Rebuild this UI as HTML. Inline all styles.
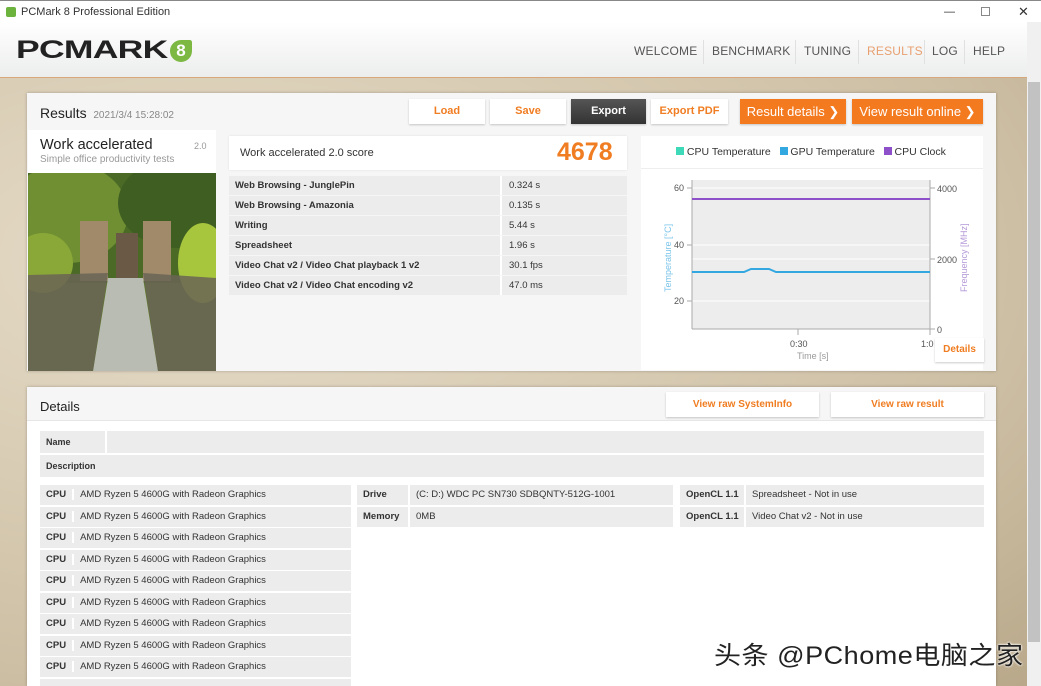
<!DOCTYPE html>
<html style="width:1041px;height:686px;overflow:hidden"><head><meta charset="utf-8"><style>
*{box-sizing:border-box;margin:0;padding:0}
body{width:1041px;height:686px;overflow:hidden;position:relative;font-family:"Liberation Sans","Noto Sans CJK SC",sans-serif;background:#d8cdb6;color:#333}
.abs{position:absolute}
.title{left:0;top:0;width:1041px;height:22px;background:#fff;font-size:11px;line-height:22px;border-top:1px solid #888}
.hdr{left:0;top:22px;width:1027px;height:56px;background:linear-gradient(#fff,#eceded);border-bottom:1px solid #d9a77d}
.nav{top:44px;font-size:12px;color:#555;letter-spacing:.2px}
.sep{top:40px;width:1px;height:24px;background:#e0e0e0}
.bg{left:0;top:78px;width:1027px;height:608px;background:radial-gradient(ellipse at 20% 30%,#e6dcc8,#cdbfa4 70%,#b9a88a)}
.scroll{left:1027px;top:22px;width:14px;height:664px;background:#f0f0f0}
.panel{background:#fff;box-shadow:0 0 3px rgba(0,0,0,.25)}
.btn{top:99px;height:25px;background:#fff;box-shadow:0 1px 2px rgba(0,0,0,.2);font-size:11px;font-weight:bold;color:#f07d22;text-align:center;line-height:25px}
.obtn{background:#f47a20;color:#fff;font-size:13px;font-weight:normal}
.row{height:19px;background:#ececec;font-size:9.5px;line-height:19px}
.lbl{font-weight:bold;padding-left:6px}
.cell{height:20px;background:#ececec;font-size:9.5px;line-height:20px}
</style></head><body>
<div class="abs title"><span style="position:absolute;left:6px;top:6px;width:10px;height:10px;background:#6cb33e;border-radius:2px"></span><span style="position:absolute;left:21px">PCMark 8 Professional Edition</span>
<span style="position:absolute;left:944px;top:0">—</span><span style="position:absolute;left:981px;top:6px;width:9px;height:9px;border:1px solid #888"></span><span style="position:absolute;left:1018px;font-size:13px">✕</span></div>
<div class="abs hdr"></div>
<div class="abs" style="left:16px;top:36px;font-size:25px;font-weight:900;color:#222;letter-spacing:-.5px;font-family:'Liberation Sans',sans-serif;transform:scaleX(1.42);transform-origin:left">PCMARK</div>
<div class="abs" style="left:170px;top:40px;width:22px;height:22px;background:#7cb842;border-radius:50% 10% 50% 50%;color:#fff;font-weight:bold;font-size:17px;text-align:center;line-height:22px">8</div>
<div class="abs nav" style="left:634px">WELCOME</div><div class="abs sep" style="left:703px"></div>
<div class="abs nav" style="left:712px">BENCHMARK</div><div class="abs sep" style="left:795px"></div>
<div class="abs nav" style="left:804px">TUNING</div><div class="abs sep" style="left:858px"></div>
<div class="abs nav" style="left:867px;color:#e8a070">RESULTS</div><div class="abs sep" style="left:924px"></div>
<div class="abs nav" style="left:932px">LOG</div><div class="abs sep" style="left:964px"></div>
<div class="abs nav" style="left:973px">HELP</div>
<div class="abs bg"></div>
<div class="abs scroll"><div style="position:absolute;left:1px;top:60px;width:12px;height:560px;background:#c2c2c2"></div></div>

<!-- Results panel -->
<div class="abs panel" style="left:27px;top:93px;width:969px;height:278px;background:#f6f6f6"></div>
<div class="abs" style="left:40px;top:105px;font-size:14px;color:#222">Results <span style="font-size:10px;color:#888">&nbsp;2021/3/4 15:28:02</span></div>
<div class="abs btn" style="left:409px;width:76px">Load</div>
<div class="abs btn" style="left:490px;width:76px">Save</div>
<div class="abs btn" style="left:571px;width:75px;background:linear-gradient(#555,#333);color:#fff">Export</div>
<div class="abs btn" style="left:651px;width:77px">Export PDF</div>
<div class="abs btn obtn" style="left:740px;width:106px">Result details ❯</div>
<div class="abs btn obtn" style="left:852px;width:131px">View result online ❯</div>
<div class="abs" style="left:28px;top:130px;width:188px;height:241px;background:#fff"></div>
<div class="abs" style="left:40px;top:137px;font-size:14.5px;color:#222">Work accelerated</div>
<div class="abs" style="left:194px;top:141px;font-size:9px;color:#999">2.0</div>
<div class="abs" style="left:40px;top:154px;font-size:10px;color:#999">Simple office productivity tests</div>
<svg class="abs" style="left:28px;top:173px" width="188" height="198" viewBox="0 0 188 198">
<rect width="188" height="198" fill="#5d7a2a"/>
<rect width="188" height="110" fill="#4a6a25"/>
<ellipse cx="40" cy="40" rx="60" ry="50" fill="#6f8f32"/><ellipse cx="150" cy="30" rx="60" ry="45" fill="#3f5e22"/>
<ellipse cx="175" cy="90" rx="25" ry="40" fill="#a7c63e"/><ellipse cx="15" cy="90" rx="30" ry="30" fill="#8aa838"/>
<rect x="52" y="48" width="28" height="60" fill="#a08a6a"/><rect x="115" y="48" width="28" height="60" fill="#a08a6a"/>
<rect x="88" y="60" width="22" height="45" fill="#6a5a45"/>
<polygon points="80,105 115,105 130,198 65,198" fill="#b9bcb2"/>
<polygon points="0,102 80,100 65,198 0,198" fill="#6a6456" opacity=".85"/>
<polygon points="115,100 188,105 188,198 130,198" fill="#6a6456" opacity=".85"/>
</svg>
<div class="abs" style="left:229px;top:136px;width:398px;height:34px;background:#fff;box-shadow:0 0 2px rgba(0,0,0,.1)"></div>
<div class="abs" style="left:240px;top:147px;font-size:11px;color:#333">Work accelerated 2.0 score</div>
<div class="abs" style="left:557px;top:138px;font-size:25px;font-weight:bold;color:#f07d22">4678</div>
<div class="abs" style="left:229px;top:176px;width:398px">
<div class="row" style="position:relative;margin-bottom:1px"><span class="lbl">Web Browsing - JunglePin</span><span style="position:absolute;left:271px;border-left:2px solid #fff;padding-left:7px">0.324 s</span></div>
<div class="row" style="position:relative;margin-bottom:1px"><span class="lbl">Web Browsing - Amazonia</span><span style="position:absolute;left:271px;border-left:2px solid #fff;padding-left:7px">0.135 s</span></div>
<div class="row" style="position:relative;margin-bottom:1px"><span class="lbl">Writing</span><span style="position:absolute;left:271px;border-left:2px solid #fff;padding-left:7px">5.44 s</span></div>
<div class="row" style="position:relative;margin-bottom:1px"><span class="lbl">Spreadsheet</span><span style="position:absolute;left:271px;border-left:2px solid #fff;padding-left:7px">1.96 s</span></div>
<div class="row" style="position:relative;margin-bottom:1px"><span class="lbl">Video Chat v2 / Video Chat playback 1 v2</span><span style="position:absolute;left:271px;border-left:2px solid #fff;padding-left:7px">30.1 fps</span></div>
<div class="row" style="position:relative;margin-bottom:1px"><span class="lbl">Video Chat v2 / Video Chat encoding v2</span><span style="position:absolute;left:271px;border-left:2px solid #fff;padding-left:7px">47.0 ms</span></div>
</div>
<div class="abs" style="left:641px;top:136px;width:342px;height:234px;background:#fff"></div>
<div class="abs" style="left:676px;top:146px;font-size:10.5px;color:#333"><span style="display:inline-block;width:8px;height:8px;background:#3dd9b8"></span> CPU Temperature &nbsp; <span style="display:inline-block;width:8px;height:8px;background:#33a8e0"></span> GPU Temperature &nbsp; <span style="display:inline-block;width:8px;height:8px;background:#8e50c8"></span> CPU Clock</div>
<div class="abs" style="left:641px;top:168px;width:342px;height:1px;background:#eee"></div>
<svg class="abs" style="left:641px;top:170px" width="355" height="200" font-family="Liberation Sans" font-size="9">
<rect x="51" y="10" width="238" height="149" fill="#ededed"/>
<g stroke="#fff"><line x1="51" y1="18" x2="289" y2="18"/><line x1="51" y1="75" x2="289" y2="75"/><line x1="51" y1="131" x2="289" y2="131"/><line x1="51" y1="89" x2="289" y2="89"/></g>
<g stroke="#aaa"><line x1="51" y1="10" x2="51" y2="159"/><line x1="289" y1="10" x2="289" y2="159"/><line x1="51" y1="159" x2="289" y2="159"/>
<line x1="46" y1="18" x2="51" y2="18"/><line x1="46" y1="75" x2="51" y2="75"/><line x1="46" y1="131" x2="51" y2="131"/>
<line x1="289" y1="18" x2="294" y2="18"/><line x1="289" y1="89" x2="294" y2="89"/><line x1="289" y1="159" x2="294" y2="159"/>
<line x1="157" y1="159" x2="157" y2="165"/><line x1="289" y1="159" x2="289" y2="165"/></g>
<polyline points="51,29 289,29" stroke="#8e50c8" stroke-width="2" fill="none"/>
<polyline points="51,102 103,102 110,99 128,99 135,102 289,102" stroke="#33a8e0" stroke-width="2" fill="none"/>
<g fill="#555"><text x="33" y="21">60</text><text x="33" y="78">40</text><text x="33" y="134">20</text>
<text x="296" y="22">4000</text><text x="296" y="93">2000</text><text x="296" y="163">0</text>
<text x="149" y="177">0:30</text><text x="280" y="177">1:0</text><text x="156" y="189" fill="#999">Time [s]</text></g>
<text transform="translate(30,122) rotate(-90)" fill="#7bc4ea">Temperature [°C]</text>
<text transform="translate(326,122) rotate(-90)" fill="#b59ad8">Frequency [MHz]</text>
</svg>
<div class="abs btn" style="left:935px;top:338px;width:49px;height:24px;line-height:24px;font-size:10px">Details</div>

<!-- Details panel -->
<div class="abs panel" style="left:27px;top:387px;width:969px;height:299px"></div>
<div class="abs" style="left:27px;top:387px;width:969px;height:34px;background:#f6f6f6;border-bottom:1px solid #e6e6e6"></div>
<div class="abs" style="left:40px;top:399px;font-size:13px;color:#222">Details</div>
<div class="abs btn" style="left:666px;top:392px;width:153px;font-size:10px">View raw SystemInfo</div>
<div class="abs btn" style="left:831px;top:392px;width:153px;font-size:10px">View raw result</div>
<div class="abs cell" style="left:40px;top:431px;width:944px;height:22px;line-height:22px"><span class="lbl" style="font-size:9px">Name</span></div>
<div class="abs" style="left:105px;top:431px;width:2px;height:46px;background:#fff"></div>
<div class="abs cell" style="left:40px;top:455px;width:944px;height:22px;line-height:22px"><span class="lbl" style="font-size:9px">Description</span></div>
<div class="abs" style="left:40px;top:485px;width:311px;height:201px;overflow:hidden">
<div class="cell" style="margin-bottom:1.5px"><span class="lbl">CPU</span><span style="border-left:2px solid #fff;margin-left:6px;padding-left:6px">AMD Ryzen 5 4600G with Radeon Graphics</span></div>
<div class="cell" style="margin-bottom:1.5px"><span class="lbl">CPU</span><span style="border-left:2px solid #fff;margin-left:6px;padding-left:6px">AMD Ryzen 5 4600G with Radeon Graphics</span></div>
<div class="cell" style="margin-bottom:1.5px"><span class="lbl">CPU</span><span style="border-left:2px solid #fff;margin-left:6px;padding-left:6px">AMD Ryzen 5 4600G with Radeon Graphics</span></div>
<div class="cell" style="margin-bottom:1.5px"><span class="lbl">CPU</span><span style="border-left:2px solid #fff;margin-left:6px;padding-left:6px">AMD Ryzen 5 4600G with Radeon Graphics</span></div>
<div class="cell" style="margin-bottom:1.5px"><span class="lbl">CPU</span><span style="border-left:2px solid #fff;margin-left:6px;padding-left:6px">AMD Ryzen 5 4600G with Radeon Graphics</span></div>
<div class="cell" style="margin-bottom:1.5px"><span class="lbl">CPU</span><span style="border-left:2px solid #fff;margin-left:6px;padding-left:6px">AMD Ryzen 5 4600G with Radeon Graphics</span></div>
<div class="cell" style="margin-bottom:1.5px"><span class="lbl">CPU</span><span style="border-left:2px solid #fff;margin-left:6px;padding-left:6px">AMD Ryzen 5 4600G with Radeon Graphics</span></div>
<div class="cell" style="margin-bottom:1.5px"><span class="lbl">CPU</span><span style="border-left:2px solid #fff;margin-left:6px;padding-left:6px">AMD Ryzen 5 4600G with Radeon Graphics</span></div>
<div class="cell" style="margin-bottom:1.5px"><span class="lbl">CPU</span><span style="border-left:2px solid #fff;margin-left:6px;padding-left:6px">AMD Ryzen 5 4600G with Radeon Graphics</span></div>
<div class="cell" style="margin-bottom:1.5px"></div>
</div>
<div class="abs cell" style="left:357px;top:485px;width:316px"><span class="lbl">Drive</span><span style="position:absolute;left:51px;border-left:2px solid #fff;padding-left:6px">(C: D:) WDC PC SN730 SDBQNTY-512G-1001</span></div>
<div class="abs cell" style="left:357px;top:507px;width:316px"><span class="lbl">Memory</span><span style="position:absolute;left:51px;border-left:2px solid #fff;padding-left:6px">0MB</span></div>
<div class="abs cell" style="left:680px;top:485px;width:304px"><span class="lbl">OpenCL 1.1</span><span style="position:absolute;left:64px;border-left:2px solid #fff;padding-left:6px">Spreadsheet - Not in use</span></div>
<div class="abs cell" style="left:680px;top:507px;width:304px"><span class="lbl">OpenCL 1.1</span><span style="position:absolute;left:64px;border-left:2px solid #fff;padding-left:6px">Video Chat v2 - Not in use</span></div>
<div class="abs" style="left:714px;top:636px;font-size:25px;letter-spacing:.5px;color:#222;font-family:'Liberation Sans','Noto Sans CJK SC',sans-serif;text-shadow:0 0 2px #fff,0 0 2px #fff;white-space:nowrap;transform:scaleX(1.08);transform-origin:left">头条 @PChome电脑之家</div>
</body></html>
